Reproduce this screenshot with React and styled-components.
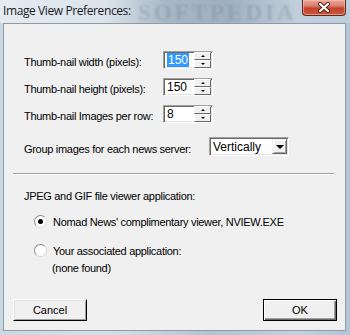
import styled, { createGlobalStyle } from "styled-components";

const GlobalStyle = createGlobalStyle`
  html, body {
    margin: 0;
    padding: 0;
    background: #c4d2df;
  }
`;

const Window = styled.div`
  width: 350px;
  height: 335px;
  display: flex;
  flex-direction: column;
  box-sizing: border-box;
  background: linear-gradient(
    90deg,
    #cad8e4 0%,
    #d6e0ea 30%,
    #b4c3d1 60%,
    #c3d1de 85%,
    #b3c5d6 100%
  );
  font-family: "Liberation Sans", Arial, sans-serif;
  font-size: 11px;
  letter-spacing: -0.3px;
  color: #000;
`;

const TitleBar = styled.div`
  position: relative;
  height: 23px;
  display: flex;
  align-items: flex-start;
  padding-left: 3px;
  box-sizing: border-box;
  background: linear-gradient(
    90deg,
    #e4ebf1 0%,
    #dbe4ec 30%,
    #a7b6c4 48%,
    #9fb0c0 65%,
    #c1cedb 85%,
    #bdcddc 100%
  );
`;

const Title = styled.span`
  margin-top: 3px;
  font-family: "Open Sans", "Noto Sans", sans-serif;
  font-size: 12px;
  line-height: 16px;
  color: #1a1a1a;
  letter-spacing: -0.4px;
  z-index: 1;
`;

const Watermark = styled.span`
  position: absolute;
  left: 138px;
  top: 0;
  font-family: "Liberation Serif", serif;
  font-weight: bold;
  font-size: 23px;
  letter-spacing: 3px;
  color: rgba(120, 135, 150, 0.35);
  filter: blur(1.2px);
`;

const CloseButton = styled.div`
  margin-left: auto;
  margin-right: 4px;
  width: 44px;
  height: 16px;
  box-sizing: border-box;
  border: 1px solid #5e2b24;
  border-top: none;
  border-radius: 0 0 4px 4px;
  background: linear-gradient(
    180deg,
    #e9a79b 0%,
    #d9806c 40%,
    #c2412a 55%,
    #cd5a40 100%
  );
  box-shadow: inset 0 0 0 1px rgba(255, 200, 190, 0.5);
  display: flex;
  align-items: center;
  justify-content: center;
  z-index: 1;
`;

const Client = styled.div`
  flex: 1;
  margin: 0 4px 4px 3px;
  border: 1px solid #8d9aa8;
  background: #f0f0f0;
  display: flex;
  flex-direction: column;
  padding: 26px 0 9px 0;
  box-sizing: border-box;
`;

const Row = styled.div`
  display: flex;
  align-items: center;
  height: ${(p) => p.$h || 18}px;
  margin-top: ${(p) => p.$mt || 0}px;
  padding-left: ${(p) => p.$pl || 20}px;
`;

const Label = styled.span`
  width: ${(p) => p.$w}px;
  flex-shrink: 0;
  padding-top: 4px;
  white-space: nowrap;
`;

const Sunken = styled.div`
  display: flex;
  align-items: center;
  box-sizing: border-box;
  width: ${(p) => p.$w}px;
  height: ${(p) => p.$h}px;
  background: #fff;
  border: 1px solid;
  border-color: #a0a0a0 #fff #fff #a0a0a0;
  box-shadow: inset 1px 1px 0 #696969, inset -1px -1px 0 #e3e3e3;
`;

const FieldText = styled.span`
  flex: 1;
  padding-left: 3px;
  font-size: 12px;
  letter-spacing: 0;
  line-height: 14px;
`;

const Selected = styled.span`
  background: #3399ff;
  color: #fff;
  padding: 0 1px;
`;

const SpinButtons = styled.div`
  width: 17px;
  height: 16px;
  display: flex;
  flex-direction: column;
  margin-right: 1px;
`;

const SpinHalf = styled.div`
  flex: 1;
  box-sizing: border-box;
  background: #f0f0f0;
  border: 1px solid;
  border-color: #fff #696969 #696969 #fff;
  display: flex;
  align-items: center;
  justify-content: center;
`;

const Arrow = styled.div`
  width: 0;
  height: 0;
  border-left: ${(p) => p.$s}px solid transparent;
  border-right: ${(p) => p.$s}px solid transparent;
  ${(p) =>
    p.$up
      ? `border-bottom: ${p.$s}px solid #000;`
      : `border-top: ${p.$s}px solid #000;`}
`;

const DropButton = styled.div`
  width: 15px;
  height: 15px;
  margin-right: 1px;
  box-sizing: border-box;
  background: #f0f0f0;
  border: 1px solid;
  border-color: #f0f0f0 #696969 #696969 #f0f0f0;
  box-shadow: inset 1px 1px 0 #fff, inset -1px -1px 0 #a0a0a0;
  display: flex;
  align-items: center;
  justify-content: center;
`;

const Separator = styled.div`
  height: 1px;
  margin: 17px 11px 0 9px;
  background: #a0a0a0;
  border-bottom: 1px solid #fff;
`;

const Text = styled.div`
  margin-top: ${(p) => p.$mt}px;
  padding-left: ${(p) => p.$pl}px;
  line-height: 13px;
  white-space: nowrap;
`;

const RadioRow = styled.label`
  display: flex;
  align-items: center;
  margin-top: ${(p) => p.$mt}px;
  padding-left: 30px;
  height: 13px;
`;

const RadioCircle = styled.span`
  width: 13px;
  height: 13px;
  box-sizing: border-box;
  border-radius: 50%;
  border: 1px solid #8a8a8a;
  border-right-color: #d8d8d8;
  border-bottom-color: #d8d8d8;
  background: #fff;
  display: flex;
  align-items: center;
  justify-content: center;
  margin-right: 6px;
  flex-shrink: 0;
`;

const RadioDot = styled.span`
  width: 5px;
  height: 5px;
  border-radius: 50%;
  background: #000;
`;

const ButtonBar = styled.div`
  margin-top: auto;
  display: flex;
  justify-content: space-between;
  padding: 0 8px 0 9px;
`;

const Button = styled.button`
  width: 74px;
  height: 22px;
  box-sizing: border-box;
  font-family: "Liberation Sans", Arial, sans-serif;
  font-size: 11px;
  letter-spacing: 0;
  color: #000;
  background: #f0f0f0;
  border: 1px solid;
  border-color: ${(p) =>
    p.$default ? "#000" : "#fff #000 #000 #fff"};
  box-shadow: ${(p) =>
    p.$default
      ? "inset 1px 1px 0 #fff, inset -1px -1px 0 #696969, inset -2px -2px 0 #a0a0a0"
      : "inset 1px 1px 0 #e3e3e3, inset -1px -1px 0 #a0a0a0"};
  padding: 0;
`;

const SpinBox = ({ value, selected }) => (
  <Sunken $w={50} $h={18}>
    <FieldText>{selected ? <Selected>{value}</Selected> : value}</FieldText>
    <SpinButtons>
      <SpinHalf>
        <Arrow $up $s={2} />
      </SpinHalf>
      <SpinHalf>
        <Arrow $s={2} />
      </SpinHalf>
    </SpinButtons>
  </Sunken>
);

const Radio = ({ checked, children, mt }) => (
  <RadioRow $mt={mt}>
    <RadioCircle>{checked && <RadioDot />}</RadioCircle>
    {children}
  </RadioRow>
);

const App = () => {
  return (
    <>
      <GlobalStyle />
      <Window>
        <TitleBar>
          <Title>Image View Preferences:</Title>
          <Watermark>SOFTPEDIA</Watermark>
          <CloseButton>
            <svg width="14" height="11" viewBox="0 0 14 11">
              <path
                d="M3 2 L11 9 M11 2 L3 9"
                stroke="#4a1f18"
                strokeWidth="4"
                strokeLinecap="round"
              />
              <path
                d="M3 2 L11 9 M11 2 L3 9"
                stroke="#fff"
                strokeWidth="2.2"
                strokeLinecap="round"
              />
            </svg>
          </CloseButton>
        </TitleBar>
        <Client>
          <Row $mt={1}>
            <Label $w={139}>Thumb-nail width (pixels):</Label>
            <SpinBox value="150" selected />
          </Row>
          <Row $mt={9}>
            <Label $w={139}>Thumb-nail height (pixels):</Label>
            <SpinBox value="150" />
          </Row>
          <Row $mt={9}>
            <Label $w={139}>Thumb-nail Images per row:</Label>
            <SpinBox value="8" />
          </Row>
          <Row $mt={14} $h={19}>
            <Label $w={185}>Group images for each news server:</Label>
            <Sunken $w={80} $h={19}>
              <FieldText>Vertically</FieldText>
              <DropButton>
                <Arrow $s={4} />
              </DropButton>
            </Sunken>
          </Row>
          <Separator />
          <Text $mt={15} $pl={20}>
            JPEG and GIF file viewer application:
          </Text>
          <Radio checked mt={12}>
            Nomad News' complimentary viewer, NVIEW.EXE
          </Radio>
          <Radio mt={16}>Your associated application:</Radio>
          <Text $mt={5} $pl={48}>
            (none found)
          </Text>
          <ButtonBar>
            <Button>Cancel</Button>
            <Button $default>OK</Button>
          </ButtonBar>
        </Client>
      </Window>
    </>
  );
};

export default App;
